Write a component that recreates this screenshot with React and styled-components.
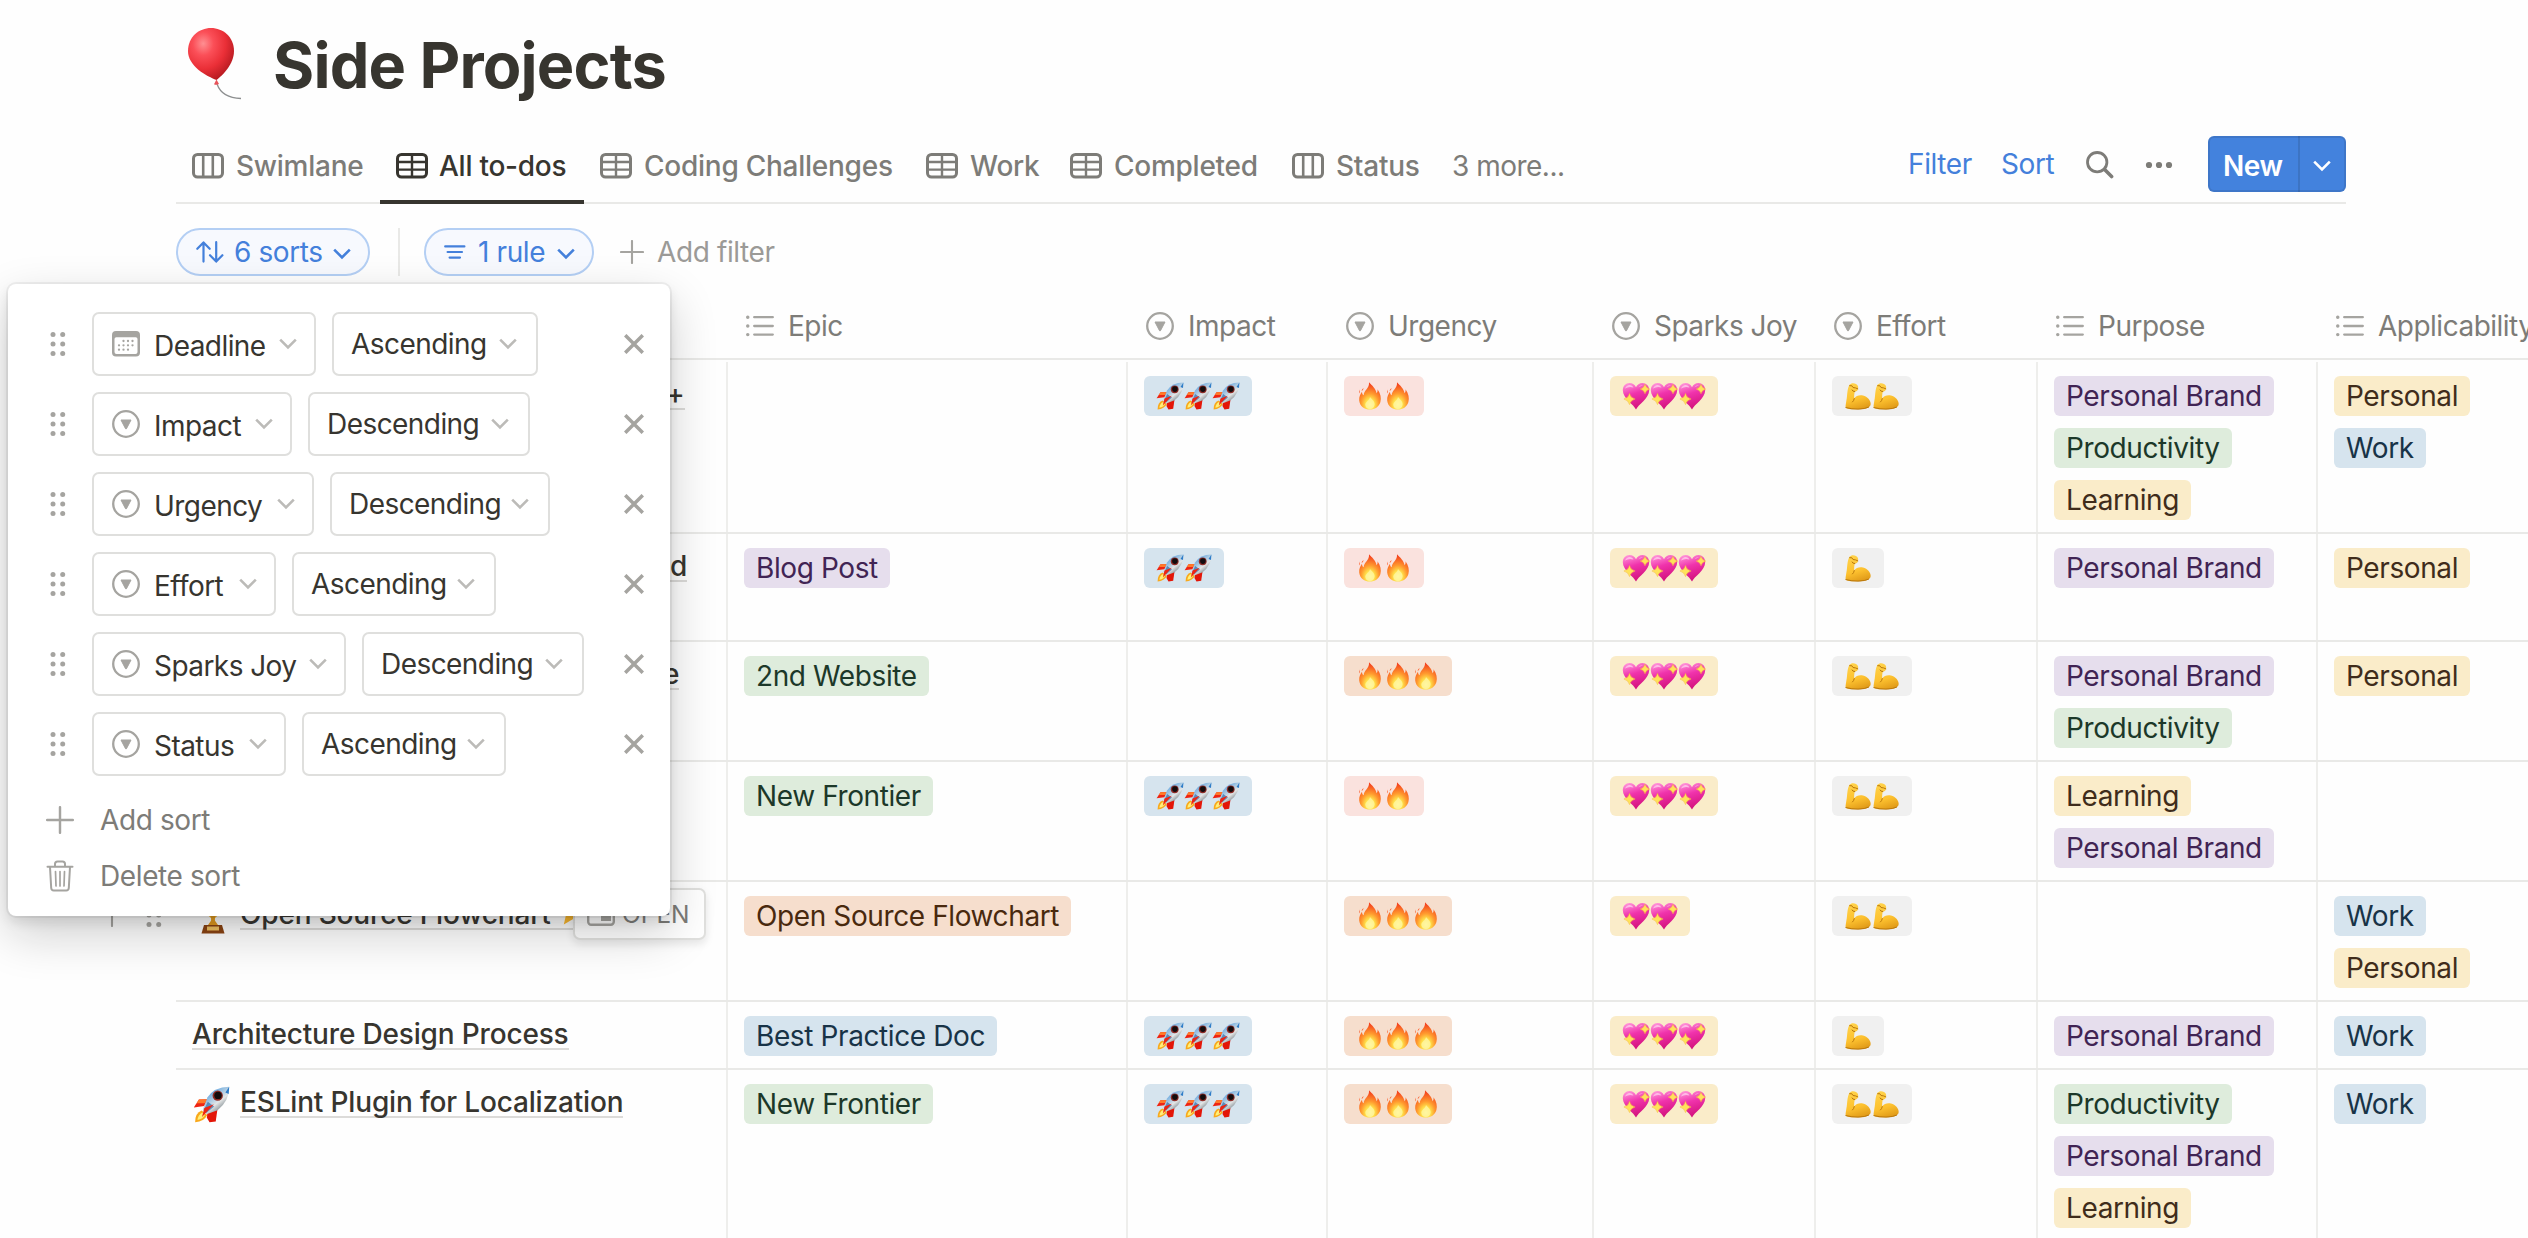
import React from "react";
import styled, { createGlobalStyle, css } from "styled-components";

const ink = "#37352f";
const muted = "#7d7c78";
const faint = "#a5a4a0";
const blue = "#4480db";
const line = "#e9e9e7";

const Global = createGlobalStyle`
  * { box-sizing: border-box; }
  html, body { margin: 0; padding: 0; background: #fefefe; }
  body {
    font-family: Inter, "Liberation Sans", sans-serif;
    font-size: 28px;
    letter-spacing: -0.014em;
    color: ${ink};
    overflow: hidden;
  }
  svg { display: block; flex: none; }
`;

/* ---------- icons ---------- */

const BoardIcon = () => (
  <svg width="32" height="26" viewBox="0 0 32 26" fill="none" stroke="currentColor">
    <rect x="1.5" y="1.5" width="29" height="22.5" rx="4" strokeWidth="3" />
    <path d="M11.2 2v22M20.8 2v22" strokeWidth="2.6" />
  </svg>
);

const TableIcon = () => (
  <svg width="32" height="26" viewBox="0 0 32 26" fill="none" stroke="currentColor">
    <rect x="1.5" y="1.5" width="29" height="22.5" rx="4" strokeWidth="3" />
    <path d="M2 9h28M2 16.6h28M16 2v22" strokeWidth="2.4" />
  </svg>
);

const SearchIcon = () => (
  <svg width="28" height="28" viewBox="0 0 28 28" fill="none" stroke={muted} strokeLinecap="round">
    <circle cx="11.2" cy="11.2" r="9.7" strokeWidth="2.8" />
    <path d="M18.6 18.6L25.6 25.6" strokeWidth="3.6" />
  </svg>
);

const DotsIcon = () => (
  <svg width="28" height="8" viewBox="0 0 28 8" fill={muted}>
    <circle cx="4" cy="4" r="3.1" />
    <circle cx="14" cy="4" r="3.1" />
    <circle cx="24" cy="4" r="3.1" />
  </svg>
);

const Chevron = ({ color = "currentColor", width = 2.6 }) => (
  <svg width="18" height="12" viewBox="0 0 18 12" fill="none" stroke={color} strokeWidth={width}>
    <path d="M1.2 1.6L9 9.4L16.8 1.6" />
  </svg>
);

const SortArrows = () => (
  <svg width="28" height="22" viewBox="0 0 28 22" fill="none" stroke="currentColor" strokeWidth="2.2" strokeLinecap="round" strokeLinejoin="round">
    <path d="M7.5 20.6V1.6M1.3 7.8L7.5 1.4L13.7 7.8" />
    <path d="M20.2 1.2V20M14 14.2L20.2 20.6L26.4 14.2" />
  </svg>
);

const FilterIcon = () => (
  <svg width="22" height="14" viewBox="0 0 22 14" stroke="currentColor" strokeWidth="2.2" strokeLinecap="round">
    <path d="M1.2 1.4H20.4M3.6 7H18M5.6 12.6H16" />
  </svg>
);

const PlusIcon = ({ size = 24 }) => (
  <svg width={size} height={size} viewBox="0 0 24 24" stroke={faint} strokeWidth="2.1" strokeLinecap="round">
    <path d="M12 1V23M1 12H23" />
  </svg>
);

const SelectIcon = () => (
  <svg width="28" height="28" viewBox="0 0 28 28" fill="none">
    <circle cx="14" cy="14" r="12.8" stroke={faint} strokeWidth="2.3" />
    <path d="M9 10H19L14.4 18.8Q14 19.400 13.6 18.8Z" fill={faint} stroke={faint} strokeWidth="1" strokeLinejoin="round" />
  </svg>
);

const ListIcon = () => (
  <svg width="28" height="22" viewBox="0 0 28 22" stroke={faint} strokeWidth="2.3" strokeLinecap="round">
    <path d="M8.2 2.2H26.8M8.2 11H26.8M8.2 19.6H26.8" />
    <path d="M1.7 2.2H1.8M1.7 11H1.8M1.7 19.6H1.8" strokeWidth="3.4" />
  </svg>
);

const CalendarIcon = () => (
  <svg width="28" height="28" viewBox="0 0 28 28">
    <path fillRule="evenodd" fill={faint} d="M4 1H24Q28 1 28 5V22.500Q28 26.500 24 26.500H4Q0 26.500 0 22.500V5Q0 1 4 1ZM2.500 9V22Q2.500 24 4.500 24H23.500Q25.500 24 25.500 22V9Q25.500 7.200 23.700 7.200H4.300Q2.500 7.200 2.500 9Z" />
    <g fill={faint}>
      {[[11.5, 11], [16, 11], [20.5, 11], [7, 15.3], [11.5, 15.3], [16, 15.3], [20.5, 15.3], [7, 19.7], [11.5, 19.7], [16, 19.7]].map(([x, y]) => (
        <circle key={`${x}-${y}`} cx={x} cy={y} r="1.15" />
      ))}
    </g>
  </svg>
);

const GripIcon = () => (
  <svg width="16" height="26" viewBox="0 0 16 26" fill={faint}>
    {[3.4, 13, 22.6].map((y) => (
      <g key={y}>
        <circle cx="3" cy={y} r="2.5" />
        <circle cx="12.7" cy={y} r="2.5" />
      </g>
    ))}
  </svg>
);

const CloseIcon = () => (
  <svg width="20" height="20" viewBox="0 0 20 20" stroke={faint} strokeWidth="3.5">
    <path d="M1.2 1.2L18.8 18.8M18.8 1.2L1.2 18.8" />
  </svg>
);

const TrashIcon = () => (
  <svg width="28" height="32" viewBox="0 0 28 32" fill="none" stroke={faint} strokeWidth="2" strokeLinecap="round" strokeLinejoin="round">
    <path d="M1.5 6.8H26.5M9 6.5V4Q9 1.5 11.5 1.5H16.5Q19 1.5 19 4V6.5" />
    <path d="M4 7L5.200 28Q5.400 30.500 7.800 30.500H20.200Q22.600 30.500 22.800 28L24 7" />
    <path d="M9.5 11.5L10 26M14 11.5V26M18.5 11.5L18 26" strokeWidth="1.7" />
  </svg>
);

const PeekIcon = () => (
  <svg width="28" height="24" viewBox="0 0 28 24">
    <rect x="1.2" y="1.2" width="25.6" height="21.6" rx="3" fill="none" stroke={faint} strokeWidth="2.4" />
    <rect x="14" y="7" width="10" height="12" fill={faint} />
  </svg>
);

/* ---------- emoji drawings ---------- */

const EmojiDefs = () => (
  <HiddenSvg aria-hidden="true">
    <defs>
      <linearGradient id="hull" x1="0.2" y1="0.1" x2="0.8" y2="0.9">
        <stop offset="0" stopColor="#4f9be0" />
        <stop offset="0.35" stopColor="#9fc4e2" />
        <stop offset="0.6" stopColor="#e4e6e6" />
        <stop offset="1" stopColor="#5c6a72" />
      </linearGradient>
      <radialGradient id="blaze" cx="0.5" cy="0.82" r="0.75">
        <stop offset="0" stopColor="#fff9b0" />
        <stop offset="0.28" stopColor="#ffe04a" />
        <stop offset="0.55" stopColor="#ff9a2e" />
        <stop offset="1" stopColor="#f4431f" />
      </radialGradient>
      <linearGradient id="heart" x1="0.3" y1="0" x2="0.6" y2="1">
        <stop offset="0" stopColor="#ff8fd6" />
        <stop offset="0.4" stopColor="#f033ac" />
        <stop offset="1" stopColor="#d00f78" />
      </linearGradient>
      <linearGradient id="skin" x1="0.3" y1="0" x2="0.6" y2="1">
        <stop offset="0" stopColor="#ffd24a" />
        <stop offset="0.6" stopColor="#fdc12f" />
        <stop offset="1" stopColor="#e09a18" />
      </linearGradient>
      <radialGradient id="rubber" cx="0.33" cy="0.3" r="0.75">
        <stop offset="0" stopColor="#ff8f92" />
        <stop offset="0.3" stopColor="#fb4f58" />
        <stop offset="0.65" stopColor="#ea2f37" />
        <stop offset="1" stopColor="#b51a20" />
      </radialGradient>
    </defs>
  </HiddenSvg>
);

const Rocket = ({ size = 28 }) => (
  <svg width={size} height={size} viewBox="0 0 28 28">
    <path d="M11 10L4.5 10.2L0.6 16.2L8.5 15.2Z" fill="#ee2413" />
    <path d="M4.5 10.2L11 10L9 13L2.8 13Z" fill="#ff7a2a" />
    <path d="M11 19L18.5 17.5L17.2 26.8L12.5 27.5L10.5 24Z" fill="#e31608" />
    <path d="M6.5 18.5Q1.5 20.5 1.6 27.4Q8.5 27 10.8 22Z" fill="#f9a91c" />
    <path d="M7 20Q3.6 22 3.4 25.8Q7.6 25 9 22Z" fill="#fff17a" />
    <path d="M27.4 0.6Q16 0.8 11 8.6L7.3 18.2L10.2 21.4L18.6 18.3Q27.4 11.5 27.4 0.6Z" fill="url(#hull)" />
    <path d="M11.2 12L8.2 18.2L10 20.5L16 15.5Z" fill="#2f6da8" opacity="0.7" />
    <path d="M27.4 0.6L24.5 5L27 6Z" fill="#2d7cc8" />
    <path d="M15.8 13.8L6.8 23.4L8.6 16.6Z" fill="#ee2413" />
    <circle cx="18.7" cy="7.3" r="3.9" fill="#8e2b26" />
    <circle cx="18.9" cy="7.1" r="2.8" fill="#120c0e" />
  </svg>
);

const Fire = () => (
  <svg width="28" height="28" viewBox="0 0 28 28">
    <path d="M13 0.3C16 3.5 19.8 6.5 20.6 11.2C21.6 9.8 21.8 8.6 21.5 7.2C24.6 11.2 25.5 16 24.4 20C23 25 18.6 27.5 14 27.5C8.5 27.5 3.8 24.3 3.2 18.4C2.9 14.6 4.5 12 6 9.8C6 11.6 6.6 12.6 7.7 13.3C7.8 8.3 13.6 6.5 13 0.3Z" fill="url(#blaze)" />
    <path d="M4 7.5Q4.2 10.5 3.6 11.5Q2.8 9.5 4 7.5ZM7.6 6Q7.4 8.4 5.6 9Q5.8 7 7.6 6Z" fill="#fb6a3c" />
    <path d="M14 15C16 17.5 19 19.5 18.6 22.8C18.2 25.6 16.2 27 14 27C11.5 27 9.4 25.6 9.3 22.8C9.3 19.8 13.5 18.5 14 15Z" fill="#fff6a0" opacity="0.8" />
  </svg>
);

const Spark = ({ x, y, r }) => (
  <path d={`M${x} ${y - r}Q${x + r * 0.2} ${y - r * 0.2} ${x + r} ${y}Q${x + r * 0.2} ${y + r * 0.2} ${x} ${y + r}Q${x - r * 0.2} ${y + r * 0.2} ${x - r} ${y}Q${x - r * 0.2} ${y - r * 0.2} ${x} ${y - r}Z`} fill="#ffe25a" stroke="#f6b93a" strokeWidth="0.5" />
);

const Heart = () => (
  <svg width="28" height="28" viewBox="0 0 28 28">
    <path d="M14 27.5C12 22.5 0.8 16.5 0.8 8.2C0.8 4 3.8 1 7.5 1C10.6 1 13 2.8 14 5.3C15 2.8 17.4 1 20.5 1C24.2 1 27.2 4 27.2 8.2C27.2 16.5 16 22.5 14 27.5Z" fill="url(#heart)" />
    <path d="M3 6.5Q4.5 2.8 8 3Q10.5 3.3 11.5 5.5Q7 4 3 6.5ZM16.5 5.5Q18 2.8 21 3Q18.5 4 16.5 5.5Z" fill="#ffc4ea" opacity="0.85" />
    <Spark x={7.5} y={17} r={5.6} />
    <Spark x={23} y={7} r={4.8} />
  </svg>
);

const Muscle = () => (
  <svg width="28" height="28" viewBox="0 0 28 28">
    <path d="M5.5 2.8C7 0.8 10 0.8 12 2C14.2 3 14.5 5 14 7C13.6 8.8 12.2 9.5 10.8 9.6C10.2 12 10 14.5 10.3 16.6C12 13.8 15.5 12.8 19 13.6C23.5 14.8 26.7 18.5 26.7 22C26.5 26 20.5 27.3 14 27.3C8.5 27.4 3 27.3 1.8 25.5C1.2 24 2.4 19.5 2.9 15C3.4 10.5 3.6 5.5 5.5 2.8Z" fill="url(#skin)" />
    <path d="M10.3 16.6Q9.8 19 8.5 20M5.7 3.6Q8.6 3 9 5.5Q11.5 5.6 13.8 6.8M10.8 9.6Q8.5 9.6 8 8M1.9 25.6Q8 27.2 14 27.1Q21 27 24.6 25.2" stroke="#b9770c" strokeWidth="1" fill="none" strokeLinecap="round" />
  </svg>
);

const Balloon = () => (
  <svg width="60" height="74" viewBox="0 0 60 74">
    <path d="M29 56Q34 70 53 70.5" fill="none" stroke="#8d8f90" strokeWidth="1.3" />
    <path d="M23 0C35 0 46 9 46 23C46 36 35 47 28.5 52C18 48 0 38 0 23C0 9 11 0 23 0Z" fill="url(#rubber)" />
    <path d="M28.5 51.5L31 56Q28.5 57.5 26 56.3Z" fill="#e8535a" />
  </svg>
);

const Trophy = () => (
  <svg width="34" height="36" viewBox="0 0 34 36">
    <path d="M8 2H26Q26 16 19 20V25H15V20Q8 16 8 2Z" fill="#f3b32a" />
    <path d="M8 5H3Q3 13 11 15M26 5H31Q31 13 23 15" fill="none" stroke="#d9941c" strokeWidth="2" />
    <path d="M14.500 17H19.500L18.500 22L22 27H12L15.500 22Z" fill="#e39a1e" />
    <path d="M8 27H26L28.500 35.500H5.500Z" fill="#8a4312" />
    <rect x="11" y="28.5" width="12" height="4" fill="#f0c060" />
  </svg>
);

const Star = () => (
  <svg width="34" height="34" viewBox="0 0 30 30">
    <path d="M15 1L19.2 10.6L29.5 11.6L21.7 18.5L24 28.7L15 23.3L6 28.7L8.3 18.5L0.5 11.6L10.8 10.6Z" fill="#fdb92c" />
  </svg>
);

const emoji = { rocket: Rocket, fire: Fire, heart: Heart, muscle: Muscle };

/* ---------- layout ---------- */

const HiddenSvg = styled.svg`
  position: absolute;
  width: 0;
  height: 0;
`;

const Page = styled.main`
  position: relative;
  width: 2528px;
  height: 1238px;
  overflow: hidden;
  padding-left: 176px;
`;

const TitleBar = styled.header`
  display: flex;
  height: 128px;
  padding: 28px 0 0 12px;
  gap: 25px;
`;

const Title = styled.h1`
  margin: 0;
  font-size: 63px;
  line-height: 74px;
  font-weight: 700;
  letter-spacing: -0.013em;
`;

const ViewBar = styled.nav`
  display: flex;
  width: 2170px;
  height: 76px;
  border-bottom: 2px solid ${line};
`;

const Tab = styled.div`
  display: flex;
  align-items: center;
  gap: ${(p) => (p.$active ? 11 : 12)}px;
  width: ${(p) => p.$width}px;
  height: 76px;
  padding: 0 0 0 16px;
  white-space: nowrap;
  font-weight: ${(p) => (p.$plain ? 400 : 500)};
  letter-spacing: ${(p) => (p.$plain ? -0.018 : -0.009)}em;
  color: ${(p) => (p.$active ? ink : muted)};
  ${(p) => p.$active && css`border-bottom: 4px solid ${ink}; padding-top: 4px;`}
`;

const Actions = styled.div`
  display: flex;
  align-items: center;
  margin-left: auto;
  color: ${blue};
`;

const ActionText = styled.span`
  width: ${(p) => p.$width}px;
  padding-bottom: 2px;
  line-height: 70px;
`;

const IconSlot = styled.span`
  display: flex;
  width: ${(p) => p.$width}px;
`;

const NewButton = styled.div`
  display: flex;
  width: 138px;
  height: 56px;
  margin-bottom: 2px;
  border-radius: 6px;
  background: #4382dd;
  box-shadow: inset 0 0 0 2px rgba(15, 15, 15, 0.1);
  color: #fff;
  font-weight: 600;
`;

const NewLabel = styled.span`
  width: 92px;
  padding-left: 15px;
  line-height: 60px;
  border-right: 2px solid rgba(15, 15, 15, 0.12);
`;

const NewMore = styled.span`
  display: flex;
  flex: 1;
  align-items: center;
  justify-content: center;
  padding: 4px 2px 0 0;
`;

const FilterBar = styled.div`
  display: flex;
  align-items: center;
  height: 90px;
  padding: 24px 0 18px;
`;

const Pill = styled.div`
  display: flex;
  align-items: center;
  gap: ${(p) => p.$gap}px;
  width: ${(p) => p.$width}px;
  height: 48px;
  padding: 0 0 0 ${(p) => p.$pad}px;
  border: 2px solid #b4cff4;
  border-radius: 24px;
  background: #f7f9fe;
  color: ${blue};
  white-space: nowrap;
`;

const Caret = styled.span`
  display: flex;
  padding-top: 3px;
`;

const Divider = styled.span`
  width: 2px;
  height: 48px;
  margin: 0 24px 0 28px;
  background: ${line};
`;

const AddFilter = styled.div`
  display: flex;
  align-items: center;
  gap: 13px;
  margin-left: 26px;
  color: #9b9a97;
`;

const columns = css`
  display: grid;
  grid-template-columns: 552px 400px 200px 266px 222px 222px 280px 300px;
  width: 2442px;
`;

const HeadRow = styled.div`
  ${columns}
  height: 66px;
  margin-bottom: 2px;
  border-bottom: 2px solid ${line};
`;

const HeadCell = styled.div`
  display: flex;
  align-items: center;
  gap: 14px;
  padding-left: 18px;
  color: ${muted};
  letter-spacing: -0.018em;
  white-space: nowrap;
`;

const Row = styled.div`
  ${columns}
  position: relative;
  height: ${(p) => p.$height}px;
  border-bottom: 2px solid ${line};
`;

const Cell = styled.div`
  display: flex;
  flex-direction: column;
  align-items: flex-start;
  gap: 12px;
  padding: 14px 0 0 16px;
  border-right: 2px solid #eeeeec;
`;

const NameCell = styled.div`
  display: flex;
  align-items: flex-start;
  gap: 10px;
  padding: 10px 0 0 ${(p) => p.$indent}px;
  border-right: 2px solid #eeeeec;
  font-weight: 500;
  letter-spacing: -0.006em;
  white-space: nowrap;
`;

const NameText = styled.span`
  display: flex;
  gap: 6px;
  height: 38px;
  line-height: 44px;
  border-bottom: 2px solid #dcdbd9;
`;

const NameEmoji = styled.span`
  display: flex;
  padding-top: 6px;
`;

const palette = {
  purple: ["#e6deed", "#412454"],
  green: ["#deecdc", "#1c3829"],
  yellow: ["#faecc9", "#402c1b"],
  blue: ["#d6e4ee", "#183347"],
  orange: ["#f6decd", "#49290e"],
  red: ["#fae2de", "#5d1715"],
  gray: ["#f0f0f0", "#32302c"],
};

const Tag = styled.span`
  display: inline-flex;
  align-items: center;
  height: 40px;
  padding: 0 12px;
  border-radius: 6px;
  line-height: 40px;
  white-space: nowrap;
  background: ${(p) => palette[p.$tone][0]};
  color: ${(p) => palette[p.$tone][1]};
`;

const RowHandle = styled.div`
  position: absolute;
  left: -76px;
  top: 20px;
  display: flex;
  align-items: center;
  gap: 22px;
`;

const OpenButton = styled.div`
  position: absolute;
  left: 397px;
  top: 6px;
  display: flex;
  align-items: center;
  gap: 7px;
  width: 133px;
  height: 52px;
  padding-left: 12px;
  border: 2px solid #e0e0de;
  border-radius: 7px;
  background: #fff;
  box-shadow: 0 4px 8px rgba(15, 15, 15, 0.1);
  color: ${muted};
  font-size: 24.5px;
  letter-spacing: 0;
`;

/* ---------- sort popover ---------- */

const Popover = styled.section`
  position: absolute;
  left: 8px;
  top: 284px;
  display: flex;
  flex-direction: column;
  gap: 16px;
  width: 662px;
  height: 632px;
  padding: 28px 26px 0 42px;
  border-radius: 8px;
  background: #fff;
  box-shadow: 0 0 0 2px rgba(15, 15, 15, 0.05), 0 6px 12px rgba(15, 15, 15, 0.1),
    0 18px 48px rgba(15, 15, 15, 0.2);
`;

const SortRow = styled.div`
  display: flex;
  align-items: center;
  height: 64px;
`;

const Grip = styled.span`
  display: flex;
  width: 42px;
`;

const SelectBox = styled.div`
  display: flex;
  align-items: center;
  width: ${(p) => p.$width}px;
  height: 64px;
  margin-right: 16px;
  padding: 0 ${(p) => (p.$order ? 19 : 17)}px 0 ${(p) => (p.$order ? 17 : 18)}px;
  border: 2px solid #dfdfdd;
  border-radius: 7px;
  letter-spacing: -0.02em;
  white-space: nowrap;
`;

const SelectLabel = styled.span`
  flex: 1;
  padding-left: ${(p) => (p.$field ? 14 : 0)}px;
  padding-top: ${(p) => (p.$field ? 4 : 0)}px;
`;

const Remove = styled.span`
  display: flex;
  margin-left: auto;
`;

const Commands = styled.div`
  display: flex;
  flex-direction: column;
`;

const Command = styled.div`
  display: flex;
  align-items: center;
  gap: 26px;
  height: 56px;
  margin-left: -4px;
  color: ${muted};
`;

/* ---------- data ---------- */

const tabs = [
  { label: "Swimlane", icon: BoardIcon, width: 204 },
  { label: "All to-dos", icon: TableIcon, width: 204, active: true },
  { label: "Coding Challenges", icon: TableIcon, width: 326 },
  { label: "Work", icon: TableIcon, width: 144 },
  { label: "Completed", icon: TableIcon, width: 222 },
  { label: "Status", icon: BoardIcon, width: 160 },
  { label: "3 more...", width: 150, plain: true },
];

const heads = [
  [ListIcon, "Epic"],
  [SelectIcon, "Impact"],
  [SelectIcon, "Urgency"],
  [SelectIcon, "Sparks Joy"],
  [SelectIcon, "Effort"],
  [ListIcon, "Purpose"],
  [ListIcon, "Applicability"],
];

const brand = ["purple", "Personal Brand"];
const productivity = ["green", "Productivity"];
const learning = ["yellow", "Learning"];
const personal = ["yellow", "Personal"];
const work = ["blue", "Work"];

const rows = [
  { height: 172, name: "+", indent: 490, impact: 3, urgency: 2, joy: 3, effort: 2, purpose: [brand, productivity, learning], scope: [personal, work] },
  { height: 108, name: "d", indent: 494, epic: ["purple", "Blog Post"], impact: 2, urgency: 2, joy: 3, effort: 1, purpose: [brand], scope: [personal] },
  { height: 120, name: "e", indent: 487, epic: ["green", "2nd Website"], impact: 0, urgency: 3, joy: 3, effort: 2, purpose: [brand, productivity], scope: [personal] },
  { height: 120, name: "", indent: 16, epic: ["green", "New Frontier"], impact: 3, urgency: 2, joy: 3, effort: 2, purpose: [learning, brand], scope: [] },
  { height: 120, name: "Open Source Flowchart", icon: "trophy", hovered: true, indent: 20, epic: ["orange", "Open Source Flowchart"], impact: 0, urgency: 3, joy: 2, effort: 2, purpose: [], scope: [work, personal] },
  { height: 68, name: "Architecture Design Process", indent: 16, epic: ["blue", "Best Practice Doc"], impact: 3, urgency: 3, joy: 3, effort: 1, purpose: [brand], scope: [work] },
  { height: 172, name: "ESLint Plugin for Localization", icon: "rocket", indent: 17, epic: ["green", "New Frontier"], impact: 3, urgency: 3, joy: 3, effort: 2, purpose: [productivity, brand, learning], scope: [work] },
];

const sorts = [
  { field: "Deadline", icon: CalendarIcon, width: 224, order: "Ascending", orderWidth: 206 },
  { field: "Impact", icon: SelectIcon, width: 200, order: "Descending", orderWidth: 222 },
  { field: "Urgency", icon: SelectIcon, width: 222, order: "Descending", orderWidth: 220 },
  { field: "Effort", icon: SelectIcon, width: 184, order: "Ascending", orderWidth: 204 },
  { field: "Sparks Joy", icon: SelectIcon, width: 254, order: "Descending", orderWidth: 222 },
  { field: "Status", icon: SelectIcon, width: 194, order: "Ascending", orderWidth: 204 },
];

const EmojiCell = ({ kind, count, tone }) => {
  const Glyph = emoji[kind];
  return (
    <Cell>
      {count > 0 && (
        <Tag $tone={tone}>
          {Array.from({ length: count }, (_, i) => (
            <Glyph key={i} />
          ))}
        </Tag>
      )}
    </Cell>
  );
};

const TagCell = ({ tags }) => (
  <Cell>
    {tags.map(([tone, label]) => (
      <Tag key={label} $tone={tone}>{label}</Tag>
    ))}
  </Cell>
);

const ProjectRow = ({ row }) => (
  <Row $height={row.height}>
    <NameCell $indent={row.indent}>
      {row.icon === "trophy" && <NameEmoji><Trophy /></NameEmoji>}
      {row.icon === "rocket" && <NameEmoji><Rocket size={37} /></NameEmoji>}
      {row.name && (
        <NameText>
          {row.name}
          {row.hovered && <Star />}
        </NameText>
      )}
    </NameCell>
    <TagCell tags={row.epic ? [row.epic] : []} />
    <EmojiCell kind="rocket" count={row.impact} tone="blue" />
    <EmojiCell kind="fire" count={row.urgency} tone={row.urgency > 2 ? "orange" : "red"} />
    <EmojiCell kind="heart" count={row.joy} tone="yellow" />
    <EmojiCell kind="muscle" count={row.effort} tone="gray" />
    <TagCell tags={row.purpose} />
    <TagCell tags={row.scope} />
    {row.hovered && (
      <>
        <RowHandle>
          <PlusIcon size={24} />
          <GripIcon />
        </RowHandle>
        <OpenButton>
          <PeekIcon />
          OPEN
        </OpenButton>
      </>
    )}
  </Row>
);

export default function App() {
  return (
    <>
      <Global />
      <EmojiDefs />
      <Page>
        <TitleBar>
          <Balloon />
          <Title>Side Projects</Title>
        </TitleBar>

        <ViewBar>
          {tabs.map(({ label, icon: Icon, width, active, plain }) => (
            <Tab key={label} $width={width} $active={active} $plain={plain}>
              {Icon && <Icon />}
              <span>{label}</span>
            </Tab>
          ))}
          <Actions>
            <ActionText $width={93}>Filter</ActionText>
            <ActionText $width={85}>Sort</ActionText>
            <IconSlot $width={59}><SearchIcon /></IconSlot>
            <IconSlot $width={63}><DotsIcon /></IconSlot>
            <NewButton>
              <NewLabel>New</NewLabel>
              <NewMore><Chevron /></NewMore>
            </NewButton>
          </Actions>
        </ViewBar>

        <FilterBar>
          <Pill $width={194} $pad={18} $gap={10}>
            <SortArrows />
            <span>6 sorts</span>
            <Caret><Chevron /></Caret>
          </Pill>
          <Divider />
          <Pill $width={170} $pad={18} $gap={12}>
            <FilterIcon />
            <span>1 rule</span>
            <Caret><Chevron /></Caret>
          </Pill>
          <AddFilter>
            <PlusIcon />
            <span>Add filter</span>
          </AddFilter>
        </FilterBar>

        <HeadRow>
          <HeadCell />
          {heads.map(([Icon, label]) => (
            <HeadCell key={label}>
              <Icon />
              <span>{label}</span>
            </HeadCell>
          ))}
        </HeadRow>
        {rows.map((row, i) => (
          <ProjectRow key={i} row={row} />
        ))}

        <Popover>
          {sorts.map(({ field, icon: Icon, width, order, orderWidth }) => (
            <SortRow key={field}>
              <Grip><GripIcon /></Grip>
              <SelectBox $width={width}>
                <Icon />
                <SelectLabel $field>{field}</SelectLabel>
                <Chevron color="#bcbbb8" />
              </SelectBox>
              <SelectBox $order $width={orderWidth}>
                <SelectLabel>{order}</SelectLabel>
                <Chevron color="#bcbbb8" />
              </SelectBox>
              <Remove><CloseIcon /></Remove>
            </SortRow>
          ))}
          <Commands>
            <Command>
              <PlusIcon size={28} />
              <span>Add sort</span>
            </Command>
            <Command>
              <TrashIcon />
              <span>Delete sort</span>
            </Command>
          </Commands>
        </Popover>
      </Page>
    </>
  );
}
